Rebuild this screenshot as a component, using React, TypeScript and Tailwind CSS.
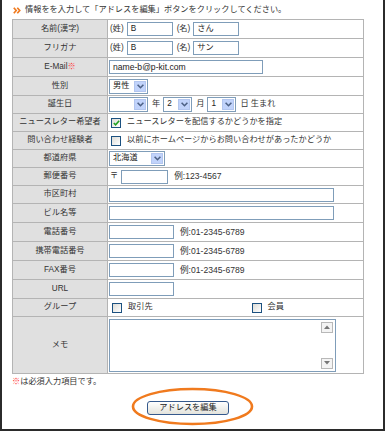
import React from 'react';

const Field = ({ className, value }: { className: string; value?: string }) => (
  <div className={`h-[14px] border border-[#7f9db9] bg-white flex items-center pl-[3px] text-[#222] ${className}`}>
    {value}
  </div>
);

const Select = ({ className, value }: { className: string; value?: string }) => (
  <div className={`h-[15px] border border-[#7f9db9] bg-white flex items-center ${className}`}>
    <span className="flex-1 pl-[3px] text-[#222]">{value}</span>
    <span className="w-[12px] h-[11px] mr-[1px] bg-[#c1d3fb] border border-[#b3c6ef] flex items-center justify-center">
      <svg width="7" height="5" viewBox="0 0 7 5">
        <path d="M0.6 0.8 L3.5 3.7 L6.4 0.8" stroke="#4d6185" strokeWidth="1.6" fill="none" />
      </svg>
    </span>
  </div>
);

const Checkbox = ({ checked }: { checked?: boolean }) => (
  <span className="w-[10px] h-[10px] shrink-0 border border-[#1c5180] bg-gradient-to-br from-[#dcdcd7] to-white flex items-center justify-center">
    {checked && (
      <svg width="7" height="6" viewBox="0 0 7 6">
        <path d="M0.8 3 L2.6 4.8 L6.2 0.8" stroke="#21a121" strokeWidth="1.6" fill="none" />
      </svg>
    )}
  </span>
);

const Row = ({ label, h, children }: { label: React.ReactNode; h: string; children?: React.ReactNode }) => (
  <div className={`flex border-b border-[#b4b4b4] ${h}`}>
    <div className="w-[95px] shrink-0 bg-[#e0e0e0] border-r border-[#b4b4b4] flex items-center justify-center text-[#333]">
      {label}
    </div>
    <div className="flex-1 flex items-center pl-[2px] text-[#333]">{children}</div>
  </div>
);

const Example = ({ text }: { text: string }) => <span className="ml-[6px] text-[8.6px]">{text}</span>;

export default function App() {
  return (
    <div className="relative w-[385px] h-[431px] bg-white border-x-2 border-b-2 border-[#2b2b2b] font-['Liberation_Sans','Noto_Sans_CJK_JP',sans-serif] text-[8.2px] leading-none text-[#333] overflow-hidden">
      {/* header */}
      <div className="h-[19px] pl-[11px] pt-[2px] flex items-center gap-[4px]">
        <svg width="8" height="7" viewBox="0 0 8 7">
          <path d="M0.8 0.8 L3.2 3.5 L0.8 6.2 M4.3 0.8 L6.7 3.5 L4.3 6.2" stroke="#f07a1e" strokeWidth="1.7" fill="none" />
        </svg>
        <span>情報をを入力して「アドレスを編集」ボタンをクリックしてください。</span>
      </div>

      {/* form table */}
      <div className="ml-[10px] w-[352px] border-x border-t border-[#b4b4b4]">
        <Row label="名前(漢字)" h="h-[19px]">
          <span>(姓)</span>
          <Field className="w-[46px] ml-[3px]" value="B" />
          <span className="ml-[4px]">(名)</span>
          <Field className="w-[46px] ml-[3px]" value="さん" />
        </Row>
        <Row label="フリガナ" h="h-[19px]">
          <span>(姓)</span>
          <Field className="w-[46px] ml-[3px]" value="B" />
          <span className="ml-[4px]">(名)</span>
          <Field className="w-[46px] ml-[3px]" value="サン" />
        </Row>
        <Row
          label={
            <span>
              E-Mail<span className="text-[#ff3333]">※</span>
            </span>
          }
          h="h-[19px]"
        >
          <Field className="w-[154px] ml-[-1px] text-[8.6px]" value="name-b@p-kit.com" />
        </Row>
        <Row label="性別" h="h-[19px]">
          <Select className="w-[39px] ml-[-1px]" value="男性" />
        </Row>
        <Row label="誕生日" h="h-[18px]">
          <Select className="w-[39px] ml-[-1px]" />
          <span className="ml-[4px]">年</span>
          <Select className="w-[29px] ml-[3px]" value="2" />
          <span className="ml-[4px]">月</span>
          <Select className="w-[29px] ml-[3px]" value="1" />
          <span className="ml-[4px]">日 生まれ</span>
        </Row>
        <Row label="ニュースレター希望者" h="h-[18px]">
          <span className="ml-[1px]">
            <Checkbox checked />
          </span>
          <span className="ml-[6px]">ニュースレターを配信するかどうかを指定</span>
        </Row>
        <Row label="問い合わせ経験者" h="h-[18px]">
          <span className="ml-[1px]">
            <Checkbox />
          </span>
          <span className="ml-[6px]">以前にホームページからお問い合わせがあったかどうか</span>
        </Row>
        <Row label="都道府県" h="h-[18px]">
          <Select className="w-[56px] ml-[-1px]" value="北海道" />
        </Row>
        <Row label="郵便番号" h="h-[18px]">
          <span>〒</span>
          <Field className="w-[47px] ml-[3px]" />
          <Example text="例:123-4567" />
        </Row>
        <Row label="市区町村" h="h-[18px]">
          <Field className="w-[225px] ml-[-1px]" />
        </Row>
        <Row label="ビル名等" h="h-[19px]">
          <Field className="w-[225px] ml-[-1px]" />
        </Row>
        <Row label="電話番号" h="h-[19px]">
          <Field className="w-[65px] ml-[-1px]" />
          <Example text="例:01-2345-6789" />
        </Row>
        <Row label="携帯電話番号" h="h-[19px]">
          <Field className="w-[65px] ml-[-1px]" />
          <Example text="例:01-2345-6789" />
        </Row>
        <Row label="FAX番号" h="h-[19px]">
          <Field className="w-[65px] ml-[-1px]" />
          <Example text="例:01-2345-6789" />
        </Row>
        <Row label="URL" h="h-[19px]">
          <Field className="w-[65px] ml-[-1px]" />
        </Row>
        <Row label="グループ" h="h-[18px]">
          <span className="ml-[2px]">
            <Checkbox />
          </span>
          <span className="ml-[6px]">取引先</span>
          <span className="ml-[99px]">
            <Checkbox />
          </span>
          <span className="ml-[6px]">会員</span>
        </Row>
        <Row label="メモ" h="h-[57px]">
          <div className="ml-[-1px] w-[227px] h-[53px] border border-[#7f9db9] bg-white flex justify-end p-[2px]">
            <div className="w-[12px] flex flex-col justify-between">
              <span className="h-[11px] border border-[#b8b8b8] bg-[#f4f4f4] flex items-center justify-center">
                <svg width="6" height="4" viewBox="0 0 6 4">
                  <path d="M0 4 L3 0.5 L6 4 Z" fill="#777" />
                </svg>
              </span>
              <span className="h-[11px] border border-[#b8b8b8] bg-[#f4f4f4] flex items-center justify-center">
                <svg width="6" height="4" viewBox="0 0 6 4">
                  <path d="M0 0 L3 3.5 L6 0 Z" fill="#777" />
                </svg>
              </span>
            </div>
          </div>
        </Row>
      </div>

      {/* note */}
      <div className="ml-[10px] mt-[3px] h-[10px] flex items-center">
        <span className="text-[#ff3333]">※</span>
        <span>は必須入力項目です。</span>
      </div>

      {/* submit */}
      <div className="mt-[14px] pl-[145px]">
        <button className="w-[82px] h-[14px] rounded-[3px] border border-[#35598c] bg-gradient-to-b from-white to-[#e3e3dc] text-[#222] flex items-center justify-center">
          アドレスを編集
        </button>
      </div>

      {/* highlight ring around the button */}
      <svg className="absolute left-[129px] top-[387px]" width="123" height="39" viewBox="0 0 123 39">
        <ellipse cx="61.5" cy="19.5" rx="59.5" ry="17.5" stroke="#f07a1e" strokeWidth="2.6" fill="none" />
      </svg>
    </div>
  );
}
